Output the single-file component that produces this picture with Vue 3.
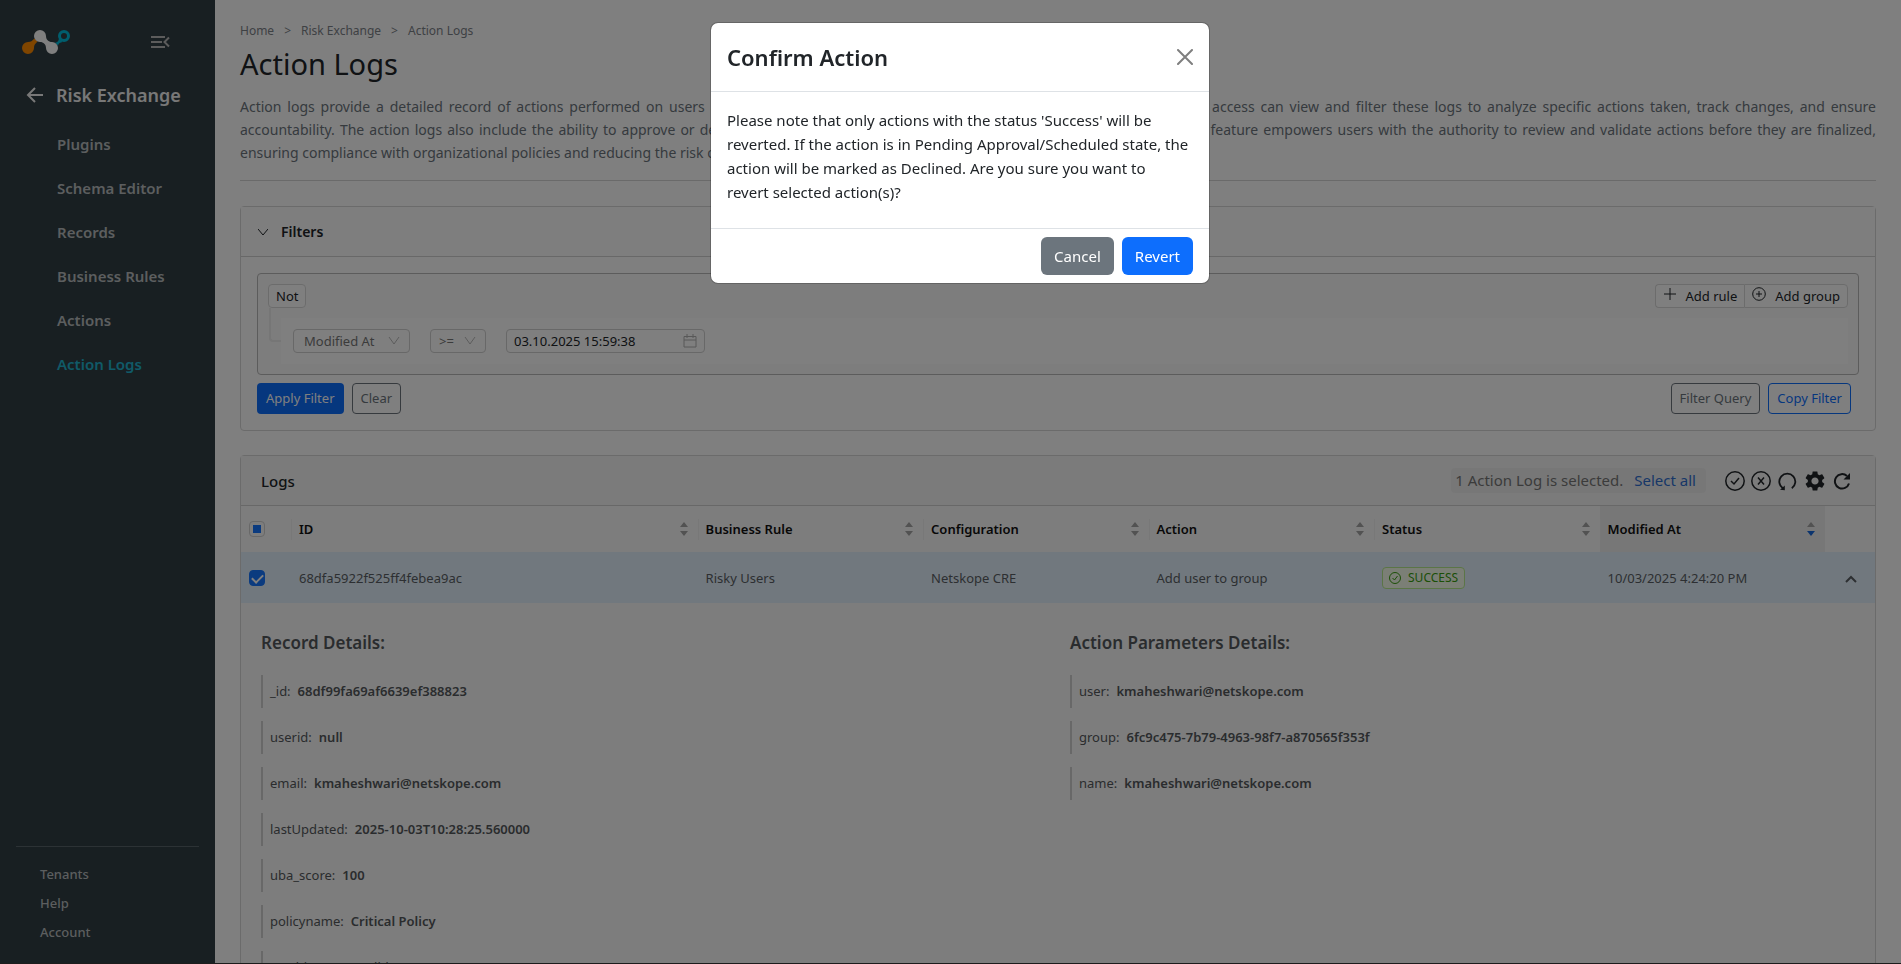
<template>
  <div class="app">
    <aside class="sidebar">
      <div class="sidebar__top">
        <a href="#" class="logo" aria-label="Netskope">
          <svg width="48" height="24" viewBox="0 0 48 24">
            <path d="M6 12c3 0 4-1 6.500-3.500l3 3C13 14 12 15 12 18A6 6 0 1 1 6 12z" fill="#ff8a00" />
            <path d="M33 12.500c3 0 3.500-2 4-4l3.500 3.500c-2 .5-4 1-4.500 3.500z" fill="#00bcdc" />
            <circle cx="42" cy="6" r="4.500" fill="none" stroke="#00bcdc" stroke-width="3" />
            <path d="M18 0a6 6 0 0 1 6 6c0 3.500 2.500 6 6 6a6 6 0 1 1-6 6c0-3.500-2.500-6-6-6a6 6 0 0 1 0-12z" fill="#fff" />
          </svg>
        </a>
        <button class="icon-btn collapse" aria-label="Collapse menu">
          <svg width="19" height="12" viewBox="0 0 19 12" fill="none" stroke="currentColor" stroke-width="2">
            <path d="M0 1h14M0 6h11M0 11h14M18 1.500L13.500 6l4.500 4.500" />
          </svg>
        </button>
      </div>
      <div class="sidebar__title">
        <button class="icon-btn" aria-label="Back">
          <svg width="17" height="16" viewBox="0 0 17 16" fill="none" stroke="currentColor" stroke-width="2">
            <path d="M17 8H2M9 1L2 8l7 7" />
          </svg>
        </button>
        <span>Risk Exchange</span>
      </div>
      <nav class="sidebar__nav">
        <a v-for="item in navItems" :key="item" href="#" :class="{ 'is-active': item === activeItem }">{{ item }}</a>
      </nav>
      <nav class="sidebar__footer">
        <a v-for="item in footerItems" :key="item" href="#">{{ item }}</a>
      </nav>
    </aside>

    <main class="content">
      <nav class="breadcrumb">
        <a href="#">Home</a><span>&gt;</span><a href="#">Risk Exchange</a><span>&gt;</span><a href="#">Action Logs</a>
      </nav>
      <h1>Action Logs</h1>
      <p class="description">
        <span v-for="line in description" :key="line">{{ line }}</span>
      </p>

      <section class="card filters">
        <header class="card__header">
          <button class="filters__toggle" @click="showFilters = !showFilters">
            <svg width="10" height="8" viewBox="0 0 10 8" fill="none" stroke="currentColor"><path d="M0 1l5 6 5-6" /></svg>
            Filters
          </button>
        </header>
        <div v-if="showFilters" class="filters__body">
          <div class="builder">
            <div class="builder__head">
              <button class="btn-ant">Not</button>
              <div class="btn-group">
                <button class="btn-ant">
                  <svg width="14" height="14" viewBox="0 0 14 14" stroke="currentColor"><path d="M7 1v12M1 7h12" /></svg>
                  Add rule
                </button>
                <button class="btn-ant">
                  <svg width="14" height="14" viewBox="0 0 14 14" fill="none" stroke="currentColor"><circle cx="7" cy="7" r="6.300" /><path d="M7 4v6M4 7h6" /></svg>
                  Add group
                </button>
              </div>
            </div>
            <div class="builder__row">
              <div class="tree"></div>
              <div class="rule">
                <div class="select select--field">
                  <select v-model="field" aria-label="Field"><option>Modified At</option></select>
                  <svg width="12" height="8" viewBox="0 0 12 8" fill="none" stroke="currentColor"><path d="M1 0l5 7 5-7" /></svg>
                </div>
                <div class="select select--operator">
                  <select v-model="operator" aria-label="Operator"><option>&gt;=</option></select>
                  <svg width="12" height="8" viewBox="0 0 12 8" fill="none" stroke="currentColor"><path d="M1 0l5 7 5-7" /></svg>
                </div>
                <label class="date">
                  <input v-model="date" type="text" aria-label="Date" />
                  <svg width="14" height="14" viewBox="0 0 14 14" fill="none" stroke="currentColor"><path d="M1 2.500h12v10.500H1zM1 6h12M4 0v4M10 0v4" /></svg>
                </label>
              </div>
            </div>
          </div>
          <div class="filters__actions">
            <button class="btn btn--sm btn--primary">Apply Filter</button>
            <button class="btn btn--sm btn--outline">Clear</button>
            <button class="btn btn--sm btn--outline push">Filter Query</button>
            <button class="btn btn--sm btn--outline-primary">Copy Filter</button>
          </div>
        </div>
      </section>

      <section class="card logs">
        <header class="card__header">
          <h2>Logs</h2>
          <p class="selection">1 Action Log is selected. <a href="#">Select all</a></p>
          <div class="tools">
            <button class="icon-btn" aria-label="Approve">
              <svg width="20" height="20" viewBox="0 0 20 20" fill="none" stroke="currentColor" stroke-width="1.500"><circle cx="10" cy="10" r="9.200" /><path d="M6 10l3 3 5-6" /></svg>
            </button>
            <button class="icon-btn" aria-label="Decline">
              <svg width="20" height="20" viewBox="0 0 20 20" fill="none" stroke="currentColor" stroke-width="1.500"><circle cx="10" cy="10" r="9.200" /><path d="M7 6.500l6 7M13 6.500l-6 7" /></svg>
            </button>
            <button class="icon-btn" aria-label="Revert">
              <svg width="20" height="20" viewBox="0 0 20 20" fill="none" stroke="currentColor" stroke-width="1.800"><path d="M5.800 17.200A8 8 0 1 1 14.800 17.200" /><path d="M3 18.800l4.800.4V14.500z" fill="currentColor" stroke="none" /></svg>
            </button>
            <button class="icon-btn" aria-label="Settings">
              <svg width="24" height="24" viewBox="0 0 24 24" fill="currentColor"><path d="M19.140 12.940c.040-.300.060-.610.060-.940 0-.320-.020-.640-.070-.940l2.030-1.580c.180-.140.230-.410.120-.610l-1.920-3.320c-.120-.220-.370-.290-.590-.220l-2.390.960c-.500-.380-1.030-.700-1.620-.940l-.360-2.540c-.040-.240-.240-.410-.480-.410h-3.840c-.240 0-.430.170-.470.410l-.360 2.540c-.590.240-1.130.570-1.620.940l-2.390-.960c-.220-.080-.470 0-.590.220L2.740 8.870c-.120.210-.080.470.120.610l2.030 1.580c-.050.300-.090.630-.090.940s.020.640.070.940l-2.030 1.580c-.180.140-.230.410-.120.610l1.920 3.320c.120.220.370.290.590.220l2.390-.960c.500.380 1.030.700 1.620.940l.360 2.540c.050.240.240.410.480.410h3.840c.240 0 .440-.170.470-.410l.360-2.540c.590-.240 1.130-.560 1.620-.940l2.390.960c.220.080.470 0 .590-.220l1.920-3.320c.120-.220.070-.470-.120-.610l-2.010-1.580zM12 15.600c-1.980 0-3.600-1.620-3.600-3.600s1.620-3.600 3.600-3.600 3.600 1.620 3.600 3.600-1.620 3.600-3.600 3.600z" /></svg>
            </button>
            <button class="icon-btn" aria-label="Refresh">
              <svg width="18" height="18" viewBox="0 0 18 18" fill="none" stroke="currentColor" stroke-width="2"><path d="M16 11.500A7.200 7.200 0 1 1 14 4" /><path d="M17 1v6.500h-6.500z" fill="currentColor" stroke="none" /></svg>
            </button>
          </div>
        </header>
        <table>
          <colgroup>
            <col class="col-check" />
            <col />
            <col v-for="n in 5" :key="n" class="col-data" />
            <col class="col-check" />
          </colgroup>
          <thead>
            <tr>
              <th><input type="checkbox" class="is-partial" aria-label="Select all rows" /></th>
              <th v-for="col in columns" :key="col" :class="{ 'is-sorted': col === sortedBy }">
                <div class="th-inner">
                  {{ col }}
                  <svg width="8" height="14" viewBox="0 0 8 14" fill="currentColor">
                    <path d="M0 5l4-5 4 5z" />
                    <path class="sort-down" d="M0 9l4 5 4-5z" />
                  </svg>
                </div>
              </th>
              <th></th>
            </tr>
          </thead>
          <tbody>
            <tr class="row">
              <td><input v-model="selected" type="checkbox" aria-label="Select row" /></td>
              <td>68dfa5922f525ff4febea9ac</td>
              <td>Risky Users</td>
              <td>Netskope CRE</td>
              <td>Add user to group</td>
              <td>
                <span class="tag">
                  <svg width="12" height="12" viewBox="0 0 12 12" fill="none" stroke="currentColor"><circle cx="6" cy="6" r="5.500" /><path d="M3.500 6l2 2 3-4" /></svg>
                  SUCCESS
                </span>
              </td>
              <td>10/03/2025 4:24:20 PM</td>
              <td>
                <button class="icon-btn expand" aria-label="Collapse row" @click="expanded = !expanded">
                  <svg width="12" height="8" viewBox="0 0 12 8" fill="none" stroke="currentColor" stroke-width="2"><path d="M1 7l5-5 5 5" /></svg>
                </button>
              </td>
            </tr>
            <tr v-if="expanded">
              <td colspan="8" class="details-cell">
                <div class="details">
                  <div v-for="group in details" :key="group.title">
                    <h3>{{ group.title }}</h3>
                    <dl v-for="[name, value] in group.items" :key="name">
                      <dt>{{ name }}:</dt>
                      <dd>{{ value }}</dd>
                    </dl>
                  </div>
                </div>
              </td>
            </tr>
          </tbody>
        </table>
      </section>
    </main>

    <div v-if="showModal" class="backdrop">
      <div class="modal" role="dialog" aria-labelledby="modal-title">
        <header class="modal__header">
          <h2 id="modal-title">Confirm Action</h2>
          <button class="icon-btn" aria-label="Close" @click="showModal = false">
            <svg width="16" height="16" viewBox="0 0 16 16" fill="none" stroke="currentColor" stroke-width="2" stroke-linecap="round"><path d="M1 1l14 14M15 1L1 15" /></svg>
          </button>
        </header>
        <p class="modal__body">
          Please note that only actions with the status 'Success' will be reverted. If the action is in Pending
          Approval/Scheduled state, the action will be marked as Declined. Are you sure you want to revert selected
          action(s)?
        </p>
        <footer class="modal__footer">
          <button class="btn btn--secondary" @click="showModal = false">Cancel</button>
          <button class="btn btn--primary" @click="showModal = false">Revert</button>
        </footer>
      </div>
    </div>
  </div>
</template>

<script setup>
import { ref } from 'vue'

const navItems = ['Plugins', 'Schema Editor', 'Records', 'Business Rules', 'Actions', 'Action Logs']
const footerItems = ['Tenants', 'Help', 'Account']
const activeItem = 'Action Logs'

const description = [
  'Action logs provide a detailed record of actions performed on users and applications by the configured business rules. Users with their write access can view and filter these logs to analyze specific actions taken, track changes, and ensure',
  'accountability. The action logs also include the ability to approve or decline the actions that require some approval from the administrator. This feature empowers users with the authority to review and validate actions before they are finalized,',
  'ensuring compliance with organizational policies and reducing the risk of unauthorized changes.',
]

const columns = ['ID', 'Business Rule', 'Configuration', 'Action', 'Status', 'Modified At']
const sortedBy = 'Modified At'

const details = [
  {
    title: 'Record Details:',
    items: [
      ['_id', '68df99fa69af6639ef388823'],
      ['userid', 'null'],
      ['email', 'kmaheshwari@netskope.com'],
      ['lastUpdated', '2025-10-03T10:28:25.560000'],
      ['uba_score', '100'],
      ['policyname', 'Critical Policy'],
      ['machine_score_allday_avg', '35'],
    ],
  },
  {
    title: 'Action Parameters Details:',
    items: [
      ['user', 'kmaheshwari@netskope.com'],
      ['group', '6fc9c475-7b79-4963-98f7-a870565f353f'],
      ['name', 'kmaheshwari@netskope.com'],
    ],
  },
]

const field = ref('Modified At')
const operator = ref('>=')
const date = ref('03.10.2025 15:59:38')
const showFilters = ref(true)
const selected = ref(true)
const expanded = ref(true)
const showModal = ref(true)
</script>

<style>
body {
  overflow: hidden;
}
</style>

<style scoped>
* {
  box-sizing: border-box;
}
.app {
  display: flex;
  height: 100vh;
  overflow: hidden;
  font-family: 'Segoe UI', 'Noto Sans', 'Open Sans', sans-serif;
  font-size: 13px;
  color: #212529;
  background: #fff;
}
a {
  text-decoration: none;
  color: inherit;
}
button,
select,
input {
  font: inherit;
  color: inherit;
}
button {
  cursor: pointer;
}
svg {
  display: block;
  flex-shrink: 0;
}
h1, h2, h3, p, dl, dd {
  margin: 0;
}
.icon-btn {
  padding: 0;
  border: none;
  background: none;
}

/* ---- Sidebar ---- */
.sidebar {
  display: flex;
  flex-direction: column;
  flex-shrink: 0;
  width: 215px;
  background: #303e44;
  color: #f0f0f0;
}
.sidebar__top {
  display: flex;
  align-items: center;
  justify-content: space-between;
  padding: 30px 45px 0 22px;
}
.collapse {
  color: #b8b8b8;
}
.sidebar__title {
  display: flex;
  align-items: center;
  gap: 13px;
  padding: 26px 0 0 26px;
  font-size: 18px;
  line-height: 30px;
  font-weight: 600;
}
.sidebar__nav {
  display: flex;
  flex-direction: column;
  gap: 20px;
  padding: 22px 0 0 57px;
  font-size: 15px;
  line-height: 24px;
  font-weight: 600;
  color: #b8bcbe;
}
.sidebar__nav .is-active {
  color: #20b4d0;
}
.sidebar__footer {
  display: flex;
  flex-direction: column;
  gap: 9px;
  margin: auto 16px 0;
  padding: 17px 24px 22px;
  border-top: 1px solid #59656a;
  font-weight: 500;
  line-height: 20px;
  color: #b8bcbe;
}

/* ---- Content ---- */
.content {
  flex: 1;
  min-width: 0;
  padding: 21px 25px 0;
}
.breadcrumb {
  display: flex;
  gap: 10px;
  font-size: 12px;
  line-height: 20px;
  color: #7c8288;
}
h1 {
  margin-top: 3px;
  font-size: 29px;
  line-height: 40px;
  font-weight: 400;
  color: #212529;
}
.description {
  padding: 11px 0 16px;
  margin-bottom: 25px;
  border-bottom: 1px solid #d4d4d4;
  font-size: 14px;
  line-height: 23px;
  color: #6c757d;
}
.description span {
  display: block;
  text-align-last: justify;
}
.description span:last-child {
  text-align-last: left;
}

.card {
  border: 1px solid #d6d6d6;
  border-radius: 4px;
}
.card__header {
  display: flex;
  align-items: center;
  height: 50px;
  padding: 0 20px;
  border-bottom: 1px solid #d0d0d0;
}
.btn {
  padding: 6px 12px;
  border: 1px solid transparent;
  border-radius: 6px;
  font-size: 15px;
  line-height: 24px;
}
.btn--sm {
  padding: 4px 8px;
  border-radius: 4px;
  font-size: 13px;
  line-height: 21px;
}
.btn--primary {
  background: #0d6efd;
  color: #fff;
}
.btn--secondary {
  background: #6c757d;
  color: #fff;
}
.btn--outline {
  background: none;
  border-color: #6c757d;
  color: #6c757d;
}
.btn--outline-primary {
  background: none;
  border-color: #0d6efd;
  color: #0d6efd;
}

/* ---- Filters ---- */
.filters {
  background: #fff;
}
.filters .card__header {
  background: #fdfdfd;
  padding: 0 17px;
}
.filters__toggle {
  display: flex;
  align-items: center;
  gap: 13px;
  padding: 0;
  border: none;
  background: none;
  font-size: 14px;
  font-weight: 600;
}
.filters__body {
  padding: 16px;
}
.builder {
  padding: 10px;
  border: 1px solid #b8b8b8;
  border-radius: 4px;
  background: #fbfbfb;
}
.builder__head {
  display: flex;
  justify-content: space-between;
}
.btn-ant {
  display: flex;
  gap: 9px;
  height: 24px;
  padding: 0 7px;
  border: 1px solid #d9d9d9;
  border-radius: 4px;
  background: #fff;
  line-height: 22px;
}
.btn-ant svg {
  margin-top: 2px;
}
.btn-group {
  display: flex;
}
.btn-group .btn-ant:first-child {
  border-right: none;
  border-radius: 4px 0 0 4px;
}
.btn-group .btn-ant:last-child {
  border-radius: 0 4px 4px 0;
}
.builder__row {
  display: flex;
  padding-left: 1px;
}
.tree {
  width: 12px;
  height: 34px;
  border: solid #ececec;
  border-width: 0 0 2px 2px;
  border-radius: 0 0 0 4px;
}
.rule {
  flex: 1;
  display: flex;
  gap: 20px;
  margin-top: 10px;
  padding: 11px 12px;
  background: #fff;
}
.select {
  position: relative;
  height: 24px;
  color: #777;
}
.select--field {
  width: 117px;
}
.select--operator {
  width: 56px;
}
.select select {
  appearance: none;
  width: 100%;
  height: 24px;
  padding: 0 24px 0 10px;
  border: 1px solid #d0d0d0;
  border-radius: 4px;
  background: none;
}
.select--operator select {
  padding: 0 20px 0 8px;
}
.select svg {
  position: absolute;
  top: 8px;
  right: 10px;
  color: #b8b8b8;
  pointer-events: none;
}
.date {
  display: flex;
  align-items: center;
  width: 199px;
  height: 24px;
  padding: 0 7px;
  border: 1px solid #d0d0d0;
  border-radius: 4px;
  color: #b0b0b0;
}
.date input {
  flex: 1;
  min-width: 0;
  padding: 0;
  border: none;
  background: none;
  color: #212529;
}
.filters__actions {
  display: flex;
  gap: 8px;
  padding: 8px 8px 0 0;
}
.push {
  margin-left: auto;
}

/* ---- Logs ---- */
.logs {
  margin-top: 24px;
  background: #fbfbfb;
}
.logs .card__header {
  background: #f7f7f7;
}
.logs h2 {
  flex: 1;
  font-size: 15px;
  font-weight: 500;
}
.selection {
  display: flex;
  gap: 11px;
  padding: 0 10px 0 4px;
  border-radius: 4px;
  background: #efefef;
  font-size: 15px;
  line-height: 25px;
  color: #777;
}
.selection a {
  color: #2f6fd0;
}
.tools {
  display: flex;
  align-items: center;
  gap: 6px;
  margin-left: 19px;
  padding-right: 4px;
}
table {
  width: 100%;
  table-layout: fixed;
  border-collapse: collapse;
}
.col-check {
  width: 50px;
}
.col-data {
  width: 13.8%;
}
th {
  height: 46px;
  padding: 0;
  text-align: left;
  font-weight: 600;
  color: #111;
}
th:first-child,
td:first-child {
  padding-left: 8px;
}
.th-inner {
  display: flex;
  align-items: center;
  justify-content: space-between;
  height: 21px;
  padding: 0 10px 0 7px;
  border-left: 1px solid #f0f0f0;
}
.th-inner svg {
  color: #a4a4a4;
}
.is-sorted {
  background: #efefef;
}
.is-sorted .sort-down {
  fill: #1668dc;
}
.row td {
  height: 51px;
  padding: 0 8px;
  background: #e3f1fd;
  color: #5a5f64;
}
input[type='checkbox'] {
  appearance: none;
  display: block;
  width: 16px;
  height: 16px;
  margin: 0;
  border: 1px solid #d0d0d0;
  border-radius: 4px;
}
input[type='checkbox'].is-partial::before {
  content: '';
  display: block;
  width: 8px;
  height: 8px;
  margin: 3px;
  background: #1677ff;
}
input[type='checkbox']:checked {
  border-color: #1677ff;
  background: #1677ff;
}
input[type='checkbox']:checked::before {
  content: '';
  display: block;
  width: 5px;
  height: 9px;
  margin: 1px 4px;
  border: solid #fff;
  border-width: 0 2px 2px 0;
  transform: rotate(45deg);
}
.tag {
  display: inline-flex;
  align-items: center;
  gap: 7px;
  height: 22px;
  padding: 0 6px;
  border: 1px solid #b7eb8f;
  border-radius: 4px;
  background: #f6ffed;
  color: #389e0d;
  font-size: 12px;
}
.expand {
  padding: 2px 12px;
}
.details-cell {
  padding: 0 8px;
}
.details {
  display: grid;
  grid-template-columns: 1fr 1fr;
  padding: 26px 0;
  color: #55595c;
}
.details > div {
  padding: 0 12px;
}
h3 {
  margin-bottom: 19px;
  font-size: 17px;
  line-height: 27px;
  font-weight: 600;
}
dl {
  display: flex;
  gap: 7px;
  margin-bottom: 13px;
  padding-left: 7px;
  border-left: 2px solid #d0d0d0;
  line-height: 33px;
}
dd {
  font-weight: 600;
}

/* ---- Modal ---- */
.backdrop {
  position: fixed;
  inset: 0;
  display: flex;
  align-items: flex-start;
  justify-content: center;
  padding: 22px 0 0 19px;
  background: rgba(0, 0, 0, 0.5);
  border-bottom: 1px solid #1c1c1c;
}
.modal {
  width: 500px;
  border: 1px solid rgba(0, 0, 0, 0.2);
  border-radius: 8px;
  background: #fff;
  background-clip: padding-box;
}
.modal__header {
  display: flex;
  align-items: center;
  justify-content: space-between;
  height: 69px;
  padding: 0 16px;
  border-bottom: 1px solid #dee2e6;
}
.modal__header h2 {
  font-size: 22px;
  font-weight: 600;
}
.modal__header .icon-btn {
  color: #7f7f7f;
}
.modal__body {
  padding: 16px 18px 24px 16px;
  font-size: 15px;
  line-height: 24px;
}
.modal__footer {
  display: flex;
  justify-content: flex-end;
  gap: 8px;
  padding: 8px 16px;
  border-top: 1px solid #dee2e6;
}
</style>
